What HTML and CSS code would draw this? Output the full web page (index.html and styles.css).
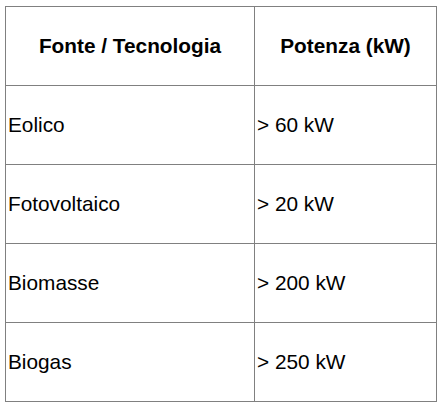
FILE: index.html
```html
<!DOCTYPE html>
<html>
<head>
<meta charset="utf-8">
<link rel="stylesheet" href="styles.css">
</head>
<body>
<table class="power-table">
  <colgroup>
    <col class="col-source">
    <col class="col-power">
  </colgroup>
  <thead>
    <tr><th>Fonte / Tecnologia</th><th>Potenza (kW)</th></tr>
  </thead>
  <tbody>
    <tr><td>Eolico</td><td>&gt; 60 kW</td></tr>
    <tr><td>Fotovoltaico</td><td>&gt; 20 kW</td></tr>
    <tr><td>Biomasse</td><td>&gt; 200 kW</td></tr>
    <tr><td>Biogas</td><td>&gt; 250 kW</td></tr>
  </tbody>
</table>
</body>
</html>
```
FILE: styles.css
```css
html, body {
  margin: 0;
  padding: 0;
  background: #ffffff;
}
body {
  padding: 6px 0 0 5px;
  font-family: Arial, "Liberation Sans", sans-serif;
  color: #000000;
}
.power-table {
  border-collapse: collapse;
  table-layout: fixed;
  width: 431px;
  font-size: 20.8px;
}
.col-source { width: 249px; }
.col-power { width: 182px; }
.power-table th,
.power-table td {
  border: 1px solid #808080;
  height: 79px;
  padding: 0 2px;
  box-sizing: border-box;
  vertical-align: middle;
}
.power-table th {
  font-weight: bold;
  text-align: center;
}
.power-table td {
  text-align: left;
}
```
